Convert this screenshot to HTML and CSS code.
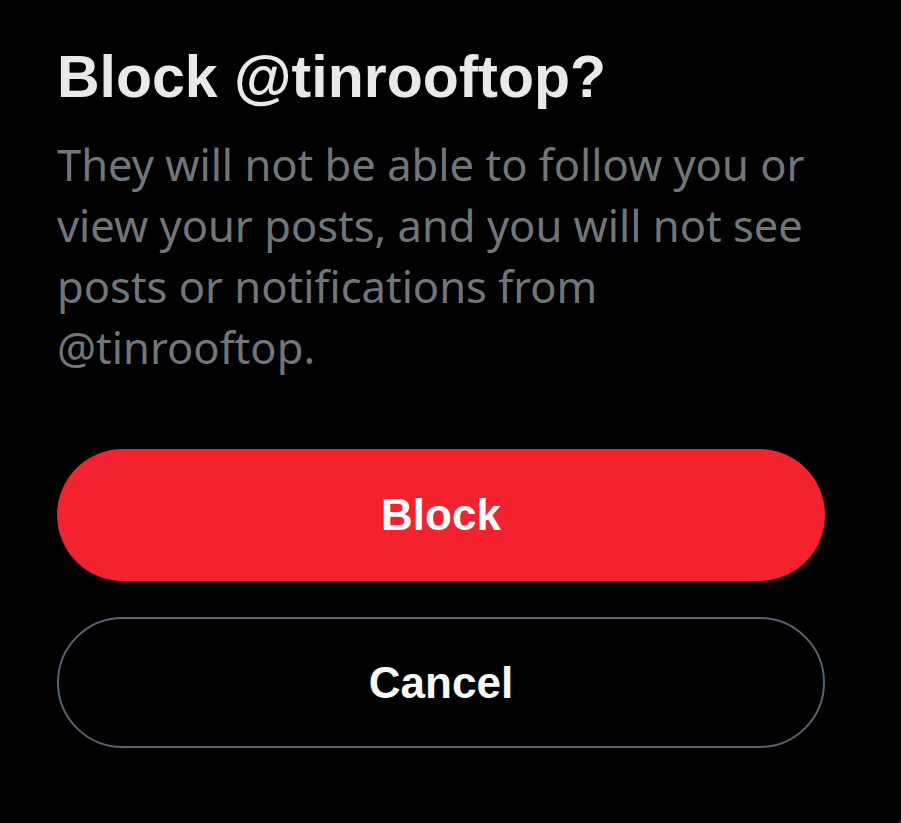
FILE: index.html
```html
<!DOCTYPE html>
<html lang="en">
<head>
<meta charset="utf-8">
<title>Block @tinrooftop?</title>
<link rel="stylesheet" href="styles.css">
</head>
<body>
<div class="dialog">
  <h1 class="title">Block @tinrooftop?</h1>
  <p class="desc">They will not be able to follow you or view your posts, and you will not see posts or notifications from @tinrooftop.</p>
  <div class="actions">
    <button class="btn btn-block">Block</button>
    <button class="btn btn-cancel">Cancel</button>
  </div>
</div>
</body>
</html>
```

FILE: styles.css
```css
html, body {
  margin: 0;
  padding: 0;
}
body {
  background: #25282b;
  width: 901px;
  height: 823px;
  overflow: hidden;
}
.dialog {
  box-sizing: border-box;
  width: 918px;
  height: 840px;
  background: #000;
  border-bottom-right-radius: 64px;
  padding: 42px 0 0 57px;
  display: flex;
  flex-direction: column;
}
.title {
  margin: 0;
  font-family: "Liberation Sans", Arial, sans-serif;
  font-weight: 700;
  font-size: 59px;
  line-height: 70px;
  color: #e7e9ea;
}
.desc {
  margin: 22px 0 0 0;
  width: 775px;
  font-family: "Noto Sans", sans-serif;
  font-weight: 400;
  font-size: 43.5px;
  line-height: 61px;
  color: #71767b;
}
.actions {
  margin-top: 71px;
  width: 768px;
  display: flex;
  flex-direction: column;
  gap: 36px;
}
.btn {
  box-sizing: border-box;
  width: 100%;
  height: 132px;
  border-radius: 999px;
  font-family: "Liberation Sans", Arial, sans-serif;
  font-weight: 700;
  font-size: 44px;
  display: flex;
  align-items: center;
  justify-content: center;
  padding: 0;
  cursor: pointer;
}
.btn-block {
  background: #f4212e;
  border: none;
  color: #ffffff;
}
.btn-cancel {
  height: 131px;
  background: #000;
  border: 2px solid #536471;
  color: #f7f9f9;
}
```
